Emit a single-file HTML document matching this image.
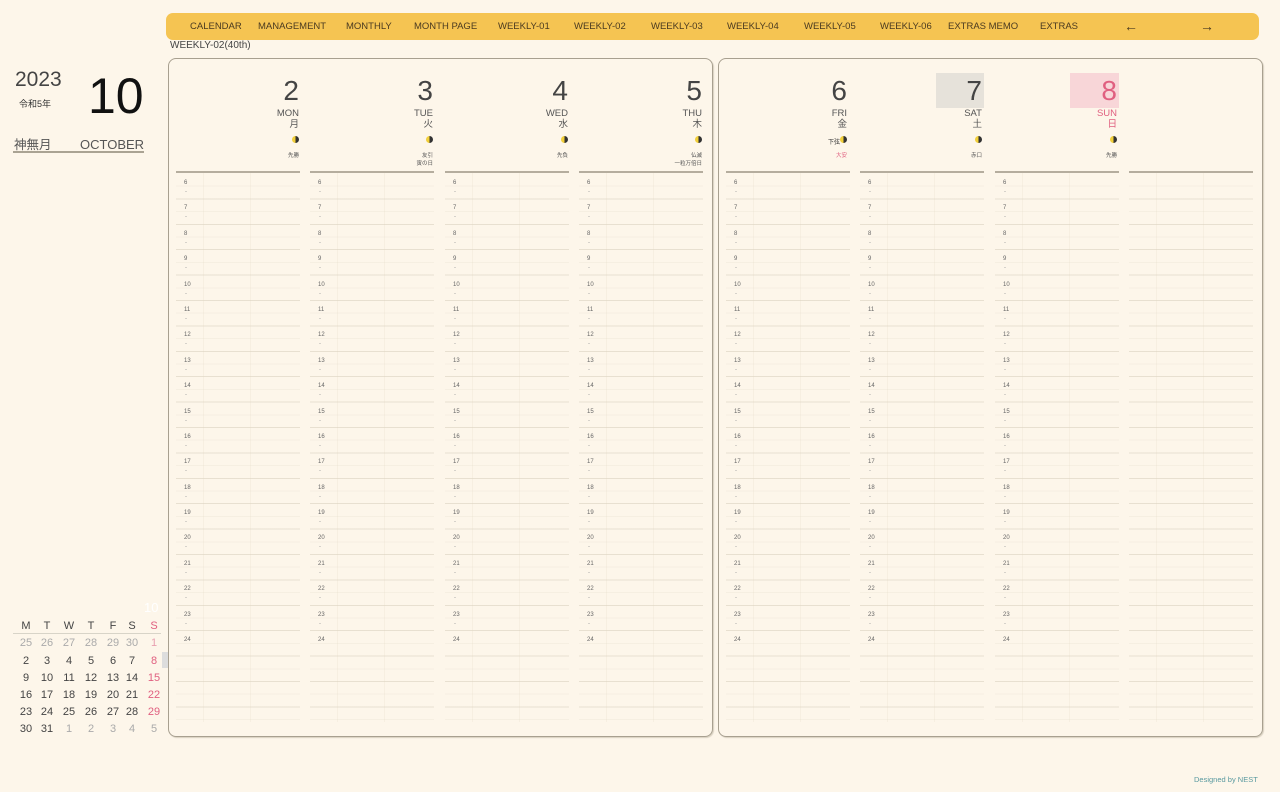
<!DOCTYPE html>
<html><head><meta charset="utf-8">
<style>
*{margin:0;padding:0;box-sizing:border-box}
body{width:1280px;height:792px;background:#fdf6ea;font-family:"Liberation Sans","Noto Sans CJK JP",sans-serif;color:#333;position:relative;overflow:hidden}
.abs{position:absolute}
.nav{left:166px;top:13px;width:1093px;height:27px;background:#f5c452;border-radius:7px;font-size:9.5px;color:#4a3a20}
.nav span{position:absolute;top:8px;white-space:nowrap}
.panel{border:1.5px solid #a8a090;border-radius:8px;box-shadow:1px 1px 1px #d8d0c0}
.col{position:absolute;top:171px;width:124px;height:551px;border-top:2px solid #b5ad9e;
background:
repeating-linear-gradient(to bottom,transparent 0,transparent 24.4px,rgba(200,190,170,.3) 24.4px,rgba(200,190,170,.3) 25.4px),
repeating-linear-gradient(to bottom,transparent 0,transparent 11.7px,rgba(215,205,185,.18) 11.7px,rgba(215,205,185,.18) 12.7px);
background-position:0 1px}
.col:before{content:"";position:absolute;left:27px;top:0;bottom:0;border-left:1px solid rgba(220,210,190,.18)}
.col:after{content:"";position:absolute;left:74px;top:0;bottom:0;border-left:1px solid rgba(220,210,190,.18)}
.col div{height:25.4px;font-size:6px;color:#666;padding-left:8px;padding-top:4px;line-height:12.7px;position:relative}
.col div:after{content:"-";position:absolute;left:9px;top:16px;font-size:6px;color:#999;line-height:6px}
.col div.l:after{content:""}
.hd{position:absolute;text-align:right;width:124px}
.hd .n{font-size:28px;line-height:30px;color:#444;height:36px;padding-top:4px}
.hd .w{font-size:9.5px;line-height:11px;color:#555}
.hd .k{font-size:9.5px;line-height:12px;color:#555}
.moon{display:inline-block;width:7px;height:7px;border-radius:50%;background:linear-gradient(to right,#f2cf3a 50%,#333 50%);vertical-align:middle}
.hd .r{font-size:5.5px;line-height:8px;color:#555;margin-top:3px}
.mc{font-size:11px;color:#444}
.mc span{position:absolute;width:20px;text-align:center}
</style></head><body>

<div class="abs nav">
<span style="left:24px">CALENDAR</span>
<span style="left:92px">MANAGEMENT</span>
<span style="left:180px">MONTHLY</span>
<span style="left:248px">MONTH PAGE</span>
<span style="left:332px">WEEKLY-01</span>
<span style="left:408px">WEEKLY-02</span>
<span style="left:485px">WEEKLY-03</span>
<span style="left:561px">WEEKLY-04</span>
<span style="left:638px">WEEKLY-05</span>
<span style="left:714px">WEEKLY-06</span>
<span style="left:782px">EXTRAS MEMO</span>
<span style="left:874px">EXTRAS</span>
<span style="left:958px;top:5px;font-size:14px">←</span>
<span style="left:1034px;top:5px;font-size:14px">→</span>
</div>
<div class="abs" style="left:170px;top:40px;font-size:10px;color:#444">WEEKLY-02(40th)</div>

<div class="abs" style="left:15px;top:68px;font-size:21px;color:#444">2023</div>
<div class="abs" style="left:19px;top:97px;font-size:9px;color:#333">令和5年</div>
<div class="abs" style="left:88px;top:68px;font-size:50px;color:#111;line-height:56px">10</div>
<div class="abs" style="left:14px;top:134px;font-size:12.5px;color:#555">神無月</div>
<div class="abs" style="left:80px;top:137px;font-size:13px;color:#555">OCTOBER</div>
<div class="abs" style="left:13px;top:151px;width:131px;border-top:2px solid #aaa393"></div>

<div class="abs panel" style="left:168px;top:58px;width:545px;height:679px"></div>
<div class="abs panel" style="left:718px;top:58px;width:545px;height:679px"></div>

<div class="abs" style="left:936px;top:73px;width:48px;height:35px;background:#e6e2da"></div>
<div class="abs" style="left:1070px;top:73px;width:49px;height:35px;background:#f8d6d8"></div>

<div class="hd" style="left:175px;top:72px"><div class="n">2</div><div class="w">MON</div><div class="k">月</div><span class="moon"></span><div class="r">先勝</div></div>
<div class="hd" style="left:309px;top:72px"><div class="n">3</div><div class="w">TUE</div><div class="k">火</div><span class="moon"></span><div class="r">友引<br>寅の日</div></div>
<div class="hd" style="left:444px;top:72px"><div class="n">4</div><div class="w">WED</div><div class="k">水</div><span class="moon"></span><div class="r">先負</div></div>
<div class="hd" style="left:578px;top:72px"><div class="n">5</div><div class="w">THU</div><div class="k">木</div><span class="moon"></span><div class="r">仏滅<br>一粒万倍日</div></div>
<div class="hd" style="left:723px;top:72px"><div class="n">6</div><div class="w">FRI</div><div class="k">金</div><span style="font-size:6px">下弦</span><span class="moon"></span><div class="r" style="color:#e06080">大安</div></div>
<div class="hd" style="left:858px;top:72px"><div class="n">7</div><div class="w">SAT</div><div class="k">土</div><span class="moon"></span><div class="r">赤口</div></div>
<div class="hd" style="left:993px;top:72px;color:#e06080"><div class="n" style="color:#e06080">8</div><div class="w" style="color:#e06080">SUN</div><div class="k" style="color:#e06080">日</div><span class="moon"></span><div class="r">先勝</div></div>

<div class="col" style="left:176px"><div>6</div><div>7</div><div>8</div><div>9</div><div>10</div><div>11</div><div>12</div><div>13</div><div>14</div><div>15</div><div>16</div><div>17</div><div>18</div><div>19</div><div>20</div><div>21</div><div>22</div><div>23</div><div class="l">24</div></div>
<div class="col" style="left:310px"><div>6</div><div>7</div><div>8</div><div>9</div><div>10</div><div>11</div><div>12</div><div>13</div><div>14</div><div>15</div><div>16</div><div>17</div><div>18</div><div>19</div><div>20</div><div>21</div><div>22</div><div>23</div><div class="l">24</div></div>
<div class="col" style="left:445px"><div>6</div><div>7</div><div>8</div><div>9</div><div>10</div><div>11</div><div>12</div><div>13</div><div>14</div><div>15</div><div>16</div><div>17</div><div>18</div><div>19</div><div>20</div><div>21</div><div>22</div><div>23</div><div class="l">24</div></div>
<div class="col" style="left:579px"><div>6</div><div>7</div><div>8</div><div>9</div><div>10</div><div>11</div><div>12</div><div>13</div><div>14</div><div>15</div><div>16</div><div>17</div><div>18</div><div>19</div><div>20</div><div>21</div><div>22</div><div>23</div><div class="l">24</div></div>
<div class="col" style="left:726px"><div>6</div><div>7</div><div>8</div><div>9</div><div>10</div><div>11</div><div>12</div><div>13</div><div>14</div><div>15</div><div>16</div><div>17</div><div>18</div><div>19</div><div>20</div><div>21</div><div>22</div><div>23</div><div class="l">24</div></div>
<div class="col" style="left:860px"><div>6</div><div>7</div><div>8</div><div>9</div><div>10</div><div>11</div><div>12</div><div>13</div><div>14</div><div>15</div><div>16</div><div>17</div><div>18</div><div>19</div><div>20</div><div>21</div><div>22</div><div>23</div><div class="l">24</div></div>
<div class="col" style="left:995px"><div>6</div><div>7</div><div>8</div><div>9</div><div>10</div><div>11</div><div>12</div><div>13</div><div>14</div><div>15</div><div>16</div><div>17</div><div>18</div><div>19</div><div>20</div><div>21</div><div>22</div><div>23</div><div class="l">24</div></div>
<div class="col" style="left:1129px"></div>

<div class="abs" style="left:144px;top:600px;font-size:13px;color:#fff">10</div>
<div class="abs" style="left:162px;top:652px;width:6px;height:16px;background:#ddd"></div>
<div class="abs" style="left:13px;top:633px;width:148px;border-top:1px solid #d8d4c8"></div>
<div class="abs mc" style="left:0;top:0">
<span style="left:16px;top:620px">M</span><span style="left:37px;top:620px">T</span><span style="left:59px;top:620px">W</span><span style="left:81px;top:620px">T</span><span style="left:103px;top:620px">F</span><span style="left:122px;top:620px">S</span><span style="left:144px;top:620px;color:#e06080">S</span>
<span style="left:16px;top:637px;color:#aaa">25</span><span style="left:37px;top:637px;color:#aaa">26</span><span style="left:59px;top:637px;color:#aaa">27</span><span style="left:81px;top:637px;color:#aaa">28</span><span style="left:103px;top:637px;color:#aaa">29</span><span style="left:122px;top:637px;color:#aaa">30</span><span style="left:144px;top:637px;color:#e8a0b0">1</span>
<span style="left:16px;top:655px">2</span><span style="left:37px;top:655px">3</span><span style="left:59px;top:655px">4</span><span style="left:81px;top:655px">5</span><span style="left:103px;top:655px">6</span><span style="left:122px;top:655px">7</span><span style="left:144px;top:655px;color:#e06080">8</span>
<span style="left:16px;top:672px">9</span><span style="left:37px;top:672px">10</span><span style="left:59px;top:672px">11</span><span style="left:81px;top:672px">12</span><span style="left:103px;top:672px">13</span><span style="left:122px;top:672px">14</span><span style="left:144px;top:672px;color:#e06080">15</span>
<span style="left:16px;top:689px">16</span><span style="left:37px;top:689px">17</span><span style="left:59px;top:689px">18</span><span style="left:81px;top:689px">19</span><span style="left:103px;top:689px">20</span><span style="left:122px;top:689px">21</span><span style="left:144px;top:689px;color:#e06080">22</span>
<span style="left:16px;top:706px">23</span><span style="left:37px;top:706px">24</span><span style="left:59px;top:706px">25</span><span style="left:81px;top:706px">26</span><span style="left:103px;top:706px">27</span><span style="left:122px;top:706px">28</span><span style="left:144px;top:706px;color:#e06080">29</span>
<span style="left:16px;top:723px">30</span><span style="left:37px;top:723px">31</span><span style="left:59px;top:723px;color:#aaa">1</span><span style="left:81px;top:723px;color:#aaa">2</span><span style="left:103px;top:723px;color:#aaa">3</span><span style="left:122px;top:723px;color:#aaa">4</span><span style="left:144px;top:723px;color:#aaa">5</span>
</div>

<div class="abs" style="left:1194px;top:775px;font-size:7.5px;color:#5a9aa0">Designed by NEST</div>
</body></html>
